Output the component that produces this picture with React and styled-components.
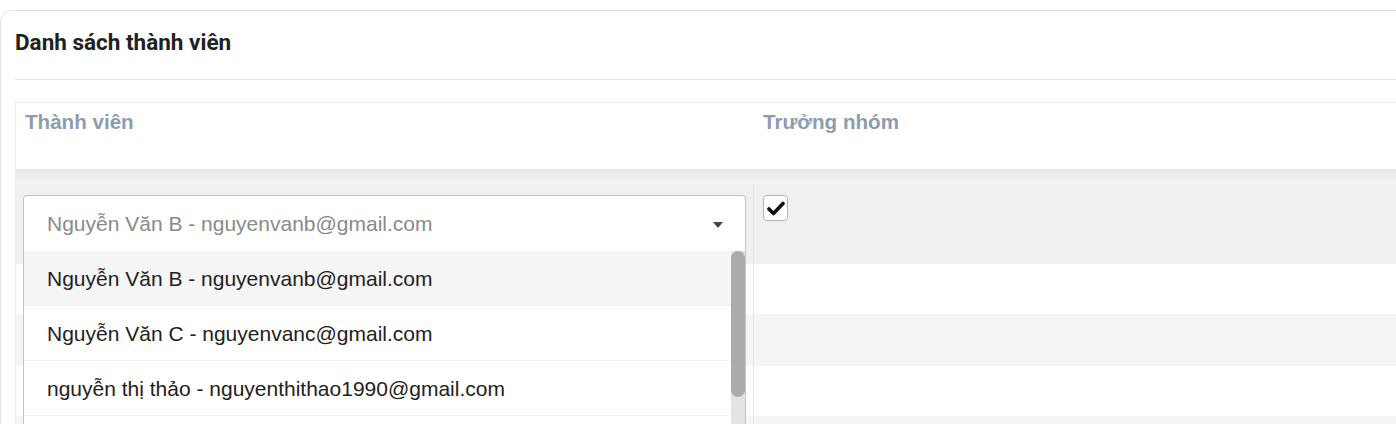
import React from "react";
import styled, { createGlobalStyle } from "styled-components";

const Global = createGlobalStyle`
  html, body { margin: 0; padding: 0; background: #fff; overflow: hidden; }
  * { box-sizing: border-box; }
`;

const Page = styled.div`
  padding-top: 10px;
  width: 1396px;
  height: 424px;
  overflow: hidden;
`;

const Card = styled.section`
  width: 1440px;
  border: 1px solid #e2e2e2;
  border-radius: 12px;
  padding: 0 0 40px 14px;
  background: #fff;
`;

const CardHeader = styled.div`
  height: 69px;
  padding-top: 17px;
  border-bottom: 1px solid #e3e3e3;
`;

const Title = styled.h2`
  margin: 0;
  font-family: Roboto, "Liberation Sans", sans-serif;
  font-weight: 700;
  font-size: 22.5px;
  line-height: 28px;
  color: #212121;
`;

const Table = styled.div`
  margin-top: 22px;
  border-top: 1px solid #ebebeb;
  border-left: 1px solid #ebebeb;
`;

const Row = styled.div`
  display: grid;
  grid-template-columns: 737px 1fr;
  height: ${(p) => p.$h}px;
  background: ${(p) => p.$bg || "#fff"};
`;

const HeadCell = styled.div`
  padding: 6px 9px 0;
  font-family: "Liberation Sans", Arial, sans-serif;
  font-weight: 700;
  font-size: 20.6px;
  line-height: 26px;
  color: #8d9cb0;
  & + & { padding-left: 10px; }
`;

const HeaderShadow = styled.div`
  height: 15px;
  background: linear-gradient(#e7e7e7, #f5f5f5);
`;

const Cell = styled.div`
  position: relative;
  padding: 11px 0 0 7px;
  & + & {
    border-left: 1px solid #e6e6e6;
    padding-left: 9px;
  }
`;

const SelectWrap = styled.div`
  position: relative;
  width: 723px;
  z-index: 2;
`;

const SelectBox = styled.div`
  height: 56px;
  display: flex;
  align-items: center;
  justify-content: space-between;
  padding: 0 22px 0 23px;
  background: #fff;
  border: 1px solid #a4cddd;
  border-bottom: none;
  border-radius: 4px 4px 0 0;
  font-family: "Liberation Sans", Arial, sans-serif;
  font-size: 21px;
  color: #8a8a8a;
`;

const Caret = styled.span`
  width: 0;
  height: 0;
  border-left: 5px solid transparent;
  border-right: 5px solid transparent;
  border-top: 6px solid #444;
  margin-top: 2px;
`;

const Menu = styled.div`
  position: absolute;
  top: 100%;
  left: 0;
  right: 0;
  display: flex;
  height: 220px;
  background: #fff;
  border-left: 1px solid #a4cddd;
  border-right: 1px solid #a4cddd;
  overflow: hidden;
`;

const OptionList = styled.ul`
  flex: 1;
  margin: 0;
  padding: 0;
  list-style: none;
  overflow: hidden;
`;

const ScrollTrack = styled.div`
  width: 14px;
  flex: none;
  background: #e3e3e3;
`;

const ScrollThumb = styled.div`
  height: 146px;
  border-radius: 7px;
  background: #ababab;
`;

const Option = styled.li`
  height: 55px;
  display: flex;
  align-items: center;
  padding-left: 23px;
  padding-top: 1px;
  border-bottom: 1px solid #f1f1f1;
  background: ${(p) => (p.$active ? "#f5f5f5" : "#fff")};
  font-family: "Liberation Sans", Arial, sans-serif;
  font-size: 21px;
  color: #222;
  white-space: nowrap;
`;

const Checkbox = styled.span`
  display: flex;
  align-items: center;
  justify-content: center;
  width: 25px;
  height: 26px;
  border: 1px solid #b3b3b3;
  border-radius: 4px;
  background: #fff;
`;

const options = [
  "Nguyễn Văn B - nguyenvanb@gmail.com",
  "Nguyễn Văn C - nguyenvanc@gmail.com",
  "nguyễn thị thảo - nguyenthithao1990@gmail.com",
];

export default function App() {
  return (
    <Page>
      <Global />
      <Card>
        <CardHeader>
          <Title>Danh sách thành viên</Title>
        </CardHeader>
        <Table>
          <Row $h={66}>
            <HeadCell>Thành viên</HeadCell>
            <HeadCell>Trưởng nhóm</HeadCell>
          </Row>
          <HeaderShadow />
          <Row $h={80} $bg="#f0f0f0">
            <Cell>
              <SelectWrap>
                <SelectBox>
                  <span>Nguyễn Văn B - nguyenvanb@gmail.com</span>
                  <Caret />
                </SelectBox>
                <Menu>
                  <OptionList>
                    {options.map((o, i) => (
                      <Option key={i} $active={i === 0}>
                        {o}
                      </Option>
                    ))}
                  </OptionList>
                  <ScrollTrack>
                    <ScrollThumb />
                  </ScrollTrack>
                </Menu>
              </SelectWrap>
            </Cell>
            <Cell>
              <Checkbox>
                <svg width="18" height="15" viewBox="0 0 18 15">
                  <path
                    d="M2 8 L6.5 12.5 L16 2.5"
                    fill="none"
                    stroke="#111"
                    strokeWidth="3.6"
                    strokeLinecap="round"
                    strokeLinejoin="round"
                  />
                </svg>
              </Checkbox>
            </Cell>
          </Row>
          <Row $h={50}>
            <Cell />
            <Cell />
          </Row>
          <Row $h={52} $bg="#f4f4f4">
            <Cell />
            <Cell />
          </Row>
          <Row $h={50}>
            <Cell />
            <Cell />
          </Row>
          <Row $h={52} $bg="#f4f4f4">
            <Cell />
            <Cell />
          </Row>
        </Table>
      </Card>
    </Page>
  );
}
